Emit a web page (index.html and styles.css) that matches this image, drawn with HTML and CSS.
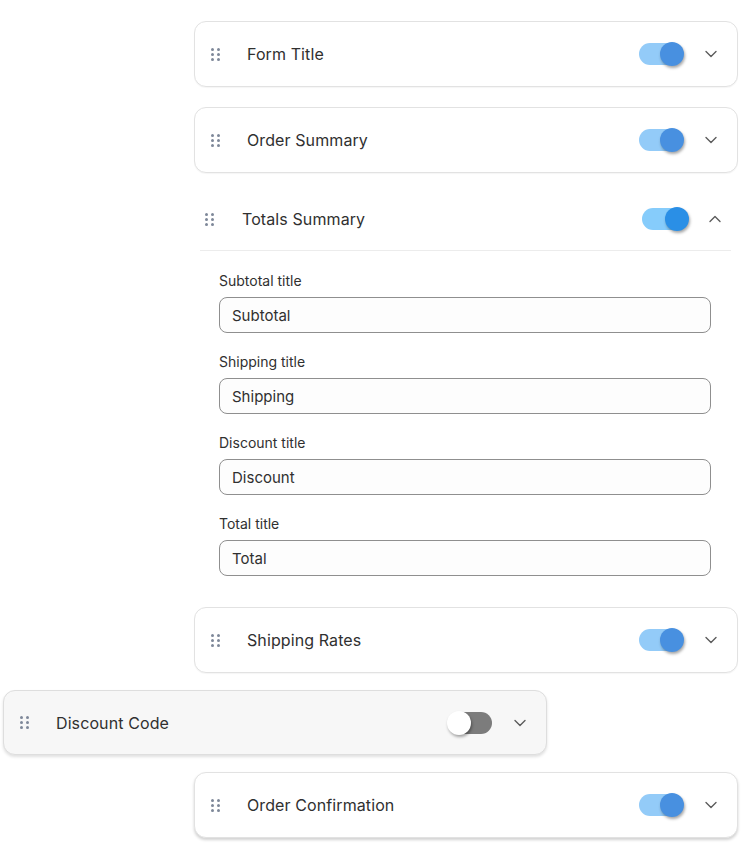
FILE: index.html
```html
<!DOCTYPE html>
<html>
<head>
    <title>Checkout Sections</title>
    <link rel="stylesheet" href="styles.css">
</head>
<body>
    <div class="sections">
        <div class="card">
            <span class="handle"><i></i><i></i><i></i><i></i><i></i><i></i></span>
            <span class="title">Form Title</span>
            <span class="toggle on"><b></b></span>
            <svg class="chev" viewBox="0 0 12 8"><path d="M1 1.5 6 6.5 11 1.5"/></svg>
        </div>
        <div class="card">
            <span class="handle"><i></i><i></i><i></i><i></i><i></i><i></i></span>
            <span class="title">Order Summary</span>
            <span class="toggle on"><b></b></span>
            <svg class="chev" viewBox="0 0 12 8"><path d="M1 1.5 6 6.5 11 1.5"/></svg>
        </div>
        <div class="panel">
            <div class="panel-head">
                <span class="handle"><i></i><i></i><i></i><i></i><i></i><i></i></span>
                <span class="title">Totals Summary</span>
                <span class="toggle on wide"><b></b></span>
                <svg class="chev" viewBox="0 0 12 8"><path d="M1 6.5 6 1.5 11 6.5"/></svg>
            </div>
            <div class="panel-body">
                <label class="field">
                    <span class="label">Subtotal title</span>
                    <input type="text" class="input" value="Subtotal">
                </label>
                <label class="field">
                    <span class="label">Shipping title</span>
                    <input type="text" class="input" value="Shipping">
                </label>
                <label class="field">
                    <span class="label">Discount title</span>
                    <input type="text" class="input" value="Discount">
                </label>
                <label class="field">
                    <span class="label">Total title</span>
                    <input type="text" class="input" value="Total">
                </label>
            </div>
        </div>
        <div class="card">
            <span class="handle"><i></i><i></i><i></i><i></i><i></i><i></i></span>
            <span class="title">Shipping Rates</span>
            <span class="toggle on"><b></b></span>
            <svg class="chev" viewBox="0 0 12 8"><path d="M1 1.5 6 6.5 11 1.5"/></svg>
        </div>
        <div class="card dragging">
            <span class="handle"><i></i><i></i><i></i><i></i><i></i><i></i></span>
            <span class="title">Discount Code</span>
            <span class="toggle"><b></b></span>
            <svg class="chev" viewBox="0 0 12 8"><path d="M1 1.5 6 6.5 11 1.5"/></svg>
        </div>
        <div class="card lifted">
            <span class="handle"><i></i><i></i><i></i><i></i><i></i><i></i></span>
            <span class="title">Order Confirmation</span>
            <span class="toggle on"><b></b></span>
            <svg class="chev" viewBox="0 0 12 8"><path d="M1 1.5 6 6.5 11 1.5"/></svg>
        </div>
    </div>
</body>
</html>
```

FILE: styles.css
```css
body
{
    margin: 0;
    background: #ffffff;
    font-family: Inter, "Noto Sans", sans-serif;
    color: #303030;
}
.sections
{
    width: 544px;
    margin-left: 194px;
    padding-top: 21px;
    display: flex;
    flex-direction: column;
}
.card
{
    box-sizing: border-box;
    height: 66px;
    border: 1px solid #e2e2e2;
    border-radius: 12px;
    background: #ffffff;
    display: flex;
    align-items: center;
    padding: 0 20px 0 16px;
    margin-bottom: 20px;
    box-shadow: 0 1px 1px rgba(0, 0, 0, 0.04);
}
.card.dragging
{
    position: relative;
    left: -191px;
    height: 65px;
    margin-top: -3px;
    margin-bottom: 17px;
    background: #f7f7f7;
    border-color: #dedede;
    box-shadow: 0 2px 3px rgba(0, 0, 0, 0.12);
}
.card.lifted
{
    box-shadow: 0 2px 3px rgba(0, 0, 0, 0.18);
}
.handle
{
    width: 9px;
    height: 13px;
    display: grid;
    grid-template-columns: 3px 3px;
    column-gap: 3px;
    row-gap: 2px;
}
.handle i
{
    width: 3px;
    height: 3px;
    border-radius: 50%;
    background: #7e8899;
}
.title
{
    flex: 1;
    margin-left: 27px;
    font-size: 16px;
    font-weight: 400;
    letter-spacing: 0.1px;
}
.toggle
{
    position: relative;
    width: 44px;
    height: 22px;
    border-radius: 11px;
    background: #7c7c7c;
    margin-right: 22px;
}
.toggle b
{
    position: absolute;
    top: -1px;
    left: -1px;
    width: 24px;
    height: 24px;
    border-radius: 50%;
    background: #ffffff;
    box-shadow: 1px 2px 3px rgba(0, 0, 0, 0.35);
}
.toggle.on
{
    background: #93cbf8;
}
.toggle.on b
{
    left: auto;
    right: -1px;
    background: #4890e0;
}
.toggle.wide
{
    width: 46px;
    background: #86ccfb;
}
.toggle.wide b
{
    background: #2a8fe6;
}
.chev
{
    width: 12px;
    height: 8px;
    fill: none;
    stroke: #5c5c5c;
    stroke-width: 1.4;
    stroke-linecap: round;
    stroke-linejoin: round;
}
.panel
{
    margin: -5px 7px 20px 6px;
}
.panel-head
{
    height: 62px;
    display: flex;
    align-items: center;
    padding: 0 10px 0 5px;
    border-bottom: 1px solid #ececec;
}
.panel-head .title
{
    margin-left: 28px;
}
.panel-head .toggle
{
    margin-right: 21px;
}
.panel-body
{
    padding: 20px 20px 11px 19px;
}
.field
{
    display: block;
    margin-bottom: 19px;
}
.field:last-child
{
    margin-bottom: 0;
}
.label
{
    display: block;
    font-size: 14px;
    line-height: 20px;
    margin-bottom: 6px;
    color: #303030;
}
.input
{
    box-sizing: border-box;
    width: 492px;
    height: 36px;
    border: 1px solid #8f8f8f;
    border-radius: 8px;
    background: #fdfdfd;
    padding: 0 12px;
    font-family: Inter, "Noto Sans", sans-serif;
    font-size: 15px;
    color: #303030;
    outline: none;
}
```
